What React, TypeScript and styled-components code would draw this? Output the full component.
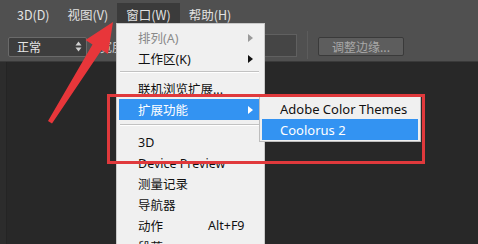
import React from "react";
import styled, { createGlobalStyle } from "styled-components";

const Global = createGlobalStyle`
  html, body { margin: 0; padding: 0; background: #282828; }
  * { box-sizing: border-box; }
`;

const CJK = `"Noto Sans CJK SC", "Noto Sans", sans-serif`;
const LAT = `"Noto Sans", "Noto Sans CJK SC", sans-serif`;

const Screen = styled.div`
  position: relative;
  width: 478px;
  height: 244px;
  overflow: hidden;
  display: flex;
  flex-direction: column;
  background: #282828;
  font-family: ${CJK};
`;

const MenuBar = styled.div`
  height: 28px;
  background: #505050;
  display: flex;
  align-items: center;
  padding: 0 0 0 8px;
`;

const MenuTitle = styled.div<{ $active?: boolean }>`
  height: 23px;
  margin-top: 1px;
  display: flex;
  align-items: center;
  padding: 0 9px;
  color: #e2e2e2;
  font-size: 12.5px;
  background: ${(p) => (p.$active ? "#3b3b3b" : "transparent")};
`;

const OptionsBar = styled.div`
  height: 34px;
  background: #505050;
  border-bottom: 1px solid #3a3a3a;
  display: flex;
  align-items: center;
  padding: 0 0 0 8px;
`;

const Select = styled.div`
  width: 79px;
  height: 20px;
  margin-top: 4px;
  background: #3d3d3d;
  border: 1px solid #6a6a6a;
  border-radius: 2px;
  display: flex;
  align-items: center;
  justify-content: space-between;
  padding: 0 4px 0 8px;
  color: #e6e6e6;
  font-size: 12px;
`;

const Label = styled.span`
  margin-left: 13px;
  color: #d8d8d8;
  font-size: 12px;
  margin-top: 4px;
`;

const Spacer = styled.div`
  flex: 1;
`;

const Input = styled.div`
  width: 40px;
  height: 23px;
  background: #454545;
  border: 1px solid #606060;
  margin-top: 2px;
`;

const VSep = styled.div`
  width: 1px;
  height: 28px;
  background: #3f3f3f;
  border-right: 1px solid #5c5c5c;
  margin: 0 10px;
`;

const Button = styled.div`
  width: 86px;
  height: 19px;
  margin-top: 4px;
  margin-right: 74px;
  background: #5d5d5d;
  border: 1px solid #3a3a3a;
  border-radius: 2px;
  color: #a8a8a8;
  font-size: 12px;
  display: flex;
  align-items: center;
  justify-content: center;
`;

const Canvas = styled.div`
  flex: 1;
  background: #282828;
  display: flex;
`;

const SideStrip = styled.div`
  width: 7px;
  background: #2c2c2c;
  border-right: 1px solid #242424;
`;

const Menu = styled.div`
  position: absolute;
  left: 116px;
  top: 23px;
  width: 149px;
  height: 230px;
  background: #f0f0f0;
  border: 1px solid #c9c9c9;
  padding: 3px 5px 0 2px;
  display: flex;
  flex-direction: column;
`;

const Item = styled.div<{ $hl?: boolean; $dis?: boolean; $h?: number }>`
  position: relative;
  height: ${(p) => p.$h ?? 21}px;
  flex: none;
  display: flex;
  align-items: center;
  padding-left: 19px;
  font-size: 12.5px;
  color: ${(p) => (p.$hl ? "#ffffff" : p.$dis ? "#8a8a8a" : "#111111")};
  background: ${(p) => (p.$hl ? "#3393f2" : "transparent")};
  font-family: ${LAT};
`;

const Shortcut = styled.span`
  position: absolute;
  left: 89px;
  font-family: ${LAT};
  font-size: 12.5px;
`;

const Arrow = styled.span<{ $c: string }>`
  position: absolute;
  right: 6px;
  top: 50%;
  margin-top: -4px;
  width: 0;
  height: 0;
  border-top: 4px solid transparent;
  border-bottom: 4px solid transparent;
  border-left: 5px solid ${(p) => p.$c};
`;

const Sep = styled.div<{ $above: number; $below: number }>`
  flex: none;
  margin: ${(p) => p.$above}px 0 ${(p) => p.$below}px 1px;
  height: 2px;
  border-top: 1px solid #c2c2c2;
  border-bottom: 1px solid #ffffff;
`;

const SubMenu = styled.div`
  position: absolute;
  left: 259px;
  top: 96px;
  width: 162px;
  height: 46px;
  background: #f0f0f0;
  border: 1px solid #bdbdbd;
  padding: 1px 2px 0 2px;
  display: flex;
  flex-direction: column;
`;

const SubItem = styled.div<{ $hl?: boolean }>`
  height: 21px;
  display: flex;
  align-items: center;
  padding-left: 18px;
  font-family: ${LAT};
  font-size: 13px;
  color: ${(p) => (p.$hl ? "#ffffff" : "#111111")};
  background: ${(p) => (p.$hl ? "#3393f2" : "transparent")};
`;

const RedBox = styled.div`
  position: absolute;
  left: 107px;
  top: 94px;
  width: 318px;
  height: 70px;
  border: 3px solid #e0393c;
  pointer-events: none;
`;

const ArrowSvg = styled.svg`
  position: absolute;
  left: 0;
  top: 0;
  pointer-events: none;
`;

export default function App() {
  return (
    <>
      <Global />
      <Screen>
        <MenuBar>
          <MenuTitle>3D(D)</MenuTitle>
          <MenuTitle>视图(V)</MenuTitle>
          <MenuTitle $active>窗口(W)</MenuTitle>
          <MenuTitle>帮助(H)</MenuTitle>
        </MenuBar>
        <OptionsBar>
          <Select>
            正常
            <svg width="7" height="11" viewBox="0 0 7 11">
              <polygon points="3.5,0.5 6.5,4.5 0.5,4.5" fill="#d0d0d0" />
              <polygon points="0.5,6.5 6.5,6.5 3.5,10.5" fill="#d0d0d0" />
            </svg>
          </Select>
          <Label>宽度</Label>
          <Spacer />
          <Input />
          <VSep />
          <Button>调整边缘...</Button>
        </OptionsBar>
        <Canvas>
          <SideStrip />
        </Canvas>

        <Menu>
          <Item $dis>
            排列(A)
            <Arrow $c="#9a9a9a" />
          </Item>
          <Item>
            工作区(K)
            <Arrow $c="#111" />
          </Item>
          <Sep $above={2} $below={4} />
          <Item $h={22}>联机浏览扩展...</Item>
          <Item $hl>
            扩展功能
            <Arrow $c="#ffffff" />
          </Item>
          <Sep $above={4} $below={6} />
          <Item $h={20.8}>3D</Item>
          <Item $h={20.8}>Device Preview</Item>
          <Item $h={20.8}>测量记录</Item>
          <Item $h={20.8}>导航器</Item>
          <Item $h={20.8}>
            动作<Shortcut>Alt+F9</Shortcut>
          </Item>
          <Item $h={20.8}>段落</Item>
        </Menu>

        <SubMenu>
          <SubItem>Adobe Color Themes</SubItem>
          <SubItem $hl>Coolorus 2</SubItem>
        </SubMenu>

        <RedBox />

        <ArrowSvg width="478" height="244" viewBox="0 0 478 244">
          <polygon
            points="113,22 108,54 101.5,50 52,123.5 48,121 92.5,44.5 85.5,40"
            fill="#e8363a"
          />
        </ArrowSvg>
      </Screen>
    </>
  );
}
